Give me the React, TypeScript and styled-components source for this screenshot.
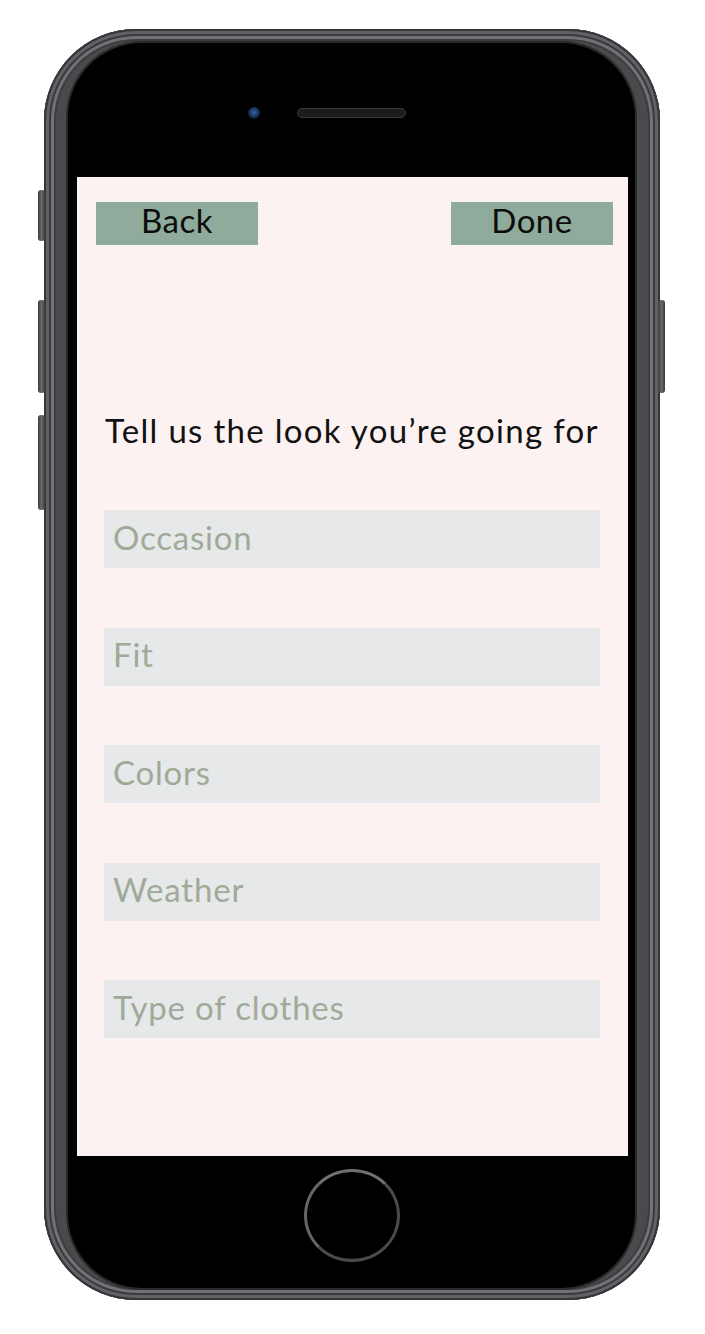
import React from "react";
import styled, { createGlobalStyle } from "styled-components";

const Global = createGlobalStyle`
  html, body { margin: 0; padding: 0; background: #ffffff; }
  body { font-family: "Lato", "Noto Sans", sans-serif; }
  * { box-sizing: border-box; }
`;

const Page = styled.div`
  width: 705px;
  height: 1334px;
  padding: 29px 0 0 44px;
  background: #ffffff;
`;

const Phone = styled.div`
  position: relative;
  width: 616px;
  height: 1271px;
  border-radius: 92px;
  padding: 14px 25px 12px 24px;
  background: #4a4a4d;
  box-shadow:
    inset 0 0 0 2px #36363a,
    inset 0 0 0 5px #626266,
    inset 0 0 0 7px #3a3a3c,
    inset 0 0 0 10px #727276,
    inset 0 0 0 12px #3d3d40;
`;

const SideKey = styled.div<{ $side: "left" | "right"; $top: number; $h: number }>`
  position: absolute;
  ${(p) => (p.$side === "left" ? "left: -6px;" : "right: -5px;")}
  top: ${(p) => p.$top}px;
  width: 7px;
  height: ${(p) => p.$h}px;
  border-radius: 3px;
  background: linear-gradient(90deg, #3a3a3d, #6a6a6e 50%, #3a3a3d);
`;

const Bezel = styled.div`
  height: 100%;
  border-radius: 74px;
  background: #000000;
  display: flex;
  flex-direction: column;
  box-shadow: 0 0 0 2px #2a2a2c;
`;

const TopArea = styled.div`
  height: 134px;
  display: grid;
  grid-template-columns: 1fr auto 1fr;
  align-items: center;
  align-content: start;
  padding-top: 64px;
`;

const Camera = styled.div`
  justify-self: end;
  margin-right: 37px;
  width: 12px;
  height: 12px;
  border-radius: 50%;
  background: radial-gradient(circle at 50% 45%, #3560a8 0%, #1b3866 45%, #0a1222 75%, #151515 100%);
`;

const Speaker = styled.div`
  width: 109px;
  height: 10px;
  border-radius: 5px;
  background: #1c1c1e;
  border: 1.5px solid #3a3a3c;
`;

const Screen = styled.div`
  margin: 0 7px 0 9px;
  height: 979px;
  background: #fcf2f1;
  display: flex;
  flex-direction: column;
`;

const TopBar = styled.div`
  display: flex;
  justify-content: space-between;
  padding: 25px 15px 0 19px;
`;

const NavButton = styled.button`
  width: 162px;
  height: 43px;
  border: none;
  border-radius: 0;
  background: #8fab9c;
  color: #0d0d0d;
  font-family: "Lato", "Noto Sans", sans-serif;
  font-size: 33px;
  line-height: 36px;
  letter-spacing: 0.5px;
  padding: 0 0 7px;
  cursor: pointer;
`;

const Heading = styled.h1`
  margin: 165px 0 0 28px;
  font-family: "Lato", "Noto Sans", sans-serif;
  font-weight: 400;
  font-size: 33px;
  line-height: 40px;
  letter-spacing: 1.3px;
  white-space: nowrap;
  color: #111111;
`;

const Form = styled.div`
  display: flex;
  flex-direction: column;
  gap: 59.5px;
  margin-top: 60px;
  padding: 0 28px 0 27px;
`;

const Field = styled.input`
  width: 100%;
  height: 58px;
  border: none;
  outline: none;
  border-radius: 0;
  background: #e7e8e9;
  padding: 0 0 5px 9px;
  font-family: "Lato", "Noto Sans", sans-serif;
  font-size: 33px;
  letter-spacing: 0.8px;
  color: #333;
  &::placeholder {
    color: #a0aa98;
  }
`;

const BottomArea = styled.div`
  flex: 1;
  display: flex;
  justify-content: center;
  padding-top: 13px;
`;

const HomeButton = styled.div`
  width: 96px;
  height: 93px;
  border-radius: 50%;
  border: 3px solid #4a4a4d;
  border-top-color: #727276;
  border-left-color: #66666a;
  background: #000;
`;

const fields = ["Occasion", "Fit", "Colors", "Weather", "Type of clothes"];

export default function App() {
  return (
    <Page>
      <Global />
      <Phone>
        <SideKey $side="left" $top={161} $h={51} />
        <SideKey $side="left" $top={271} $h={93} />
        <SideKey $side="left" $top={386} $h={95} />
        <SideKey $side="right" $top={271} $h={93} />
        <Bezel>
          <TopArea>
            <Camera />
            <Speaker />
            <div />
          </TopArea>
          <Screen>
            <TopBar>
              <NavButton>Back</NavButton>
              <NavButton>Done</NavButton>
            </TopBar>
            <Heading>Tell us the look you’re going for</Heading>
            <Form>
              {fields.map((f) => (
                <Field key={f} placeholder={f} />
              ))}
            </Form>
          </Screen>
          <BottomArea>
            <HomeButton />
          </BottomArea>
        </Bezel>
      </Phone>
    </Page>
  );
}
